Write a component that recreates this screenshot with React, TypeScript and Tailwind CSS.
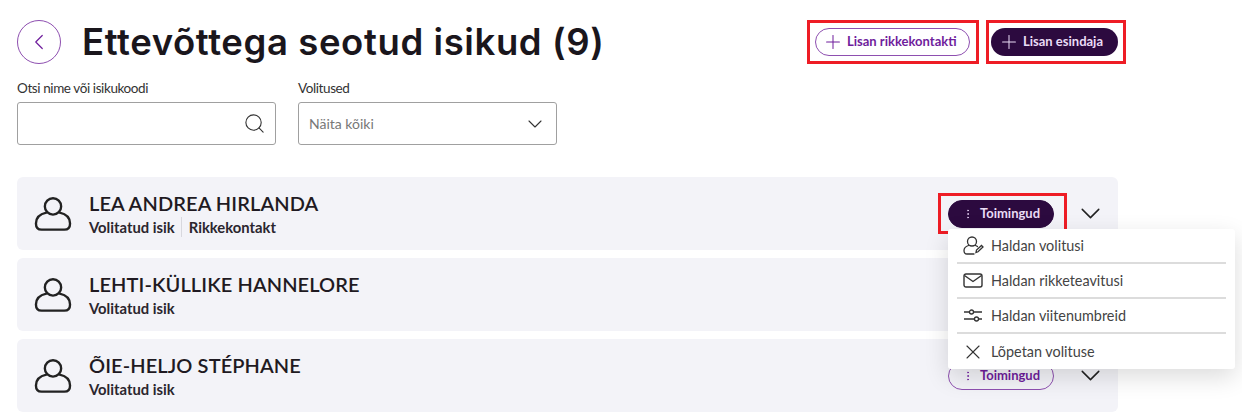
import { ChevronDown, ChevronLeft, EllipsisVertical, Plus, Search, X } from 'lucide-react';

// the second row's actions sit behind the open menu, so they are left out
const people = [
    { name: 'LEA ANDREA HIRLANDA', roles: ['Volitatud isik', 'Rikkekontakt'], active: true, covered: false },
    { name: 'LEHTI-KÜLLIKE HANNELORE', roles: ['Volitatud isik'], active: false, covered: true },
    { name: 'ÕIE-HELJO STÉPHANE', roles: ['Volitatud isik'], active: false, covered: false },
];

function PersonIcon() {
    return (
        <svg width="38" height="36" viewBox="0 0 40 38" fill="none" stroke="#222" strokeWidth="2.5" className="shrink-0">
            <circle cx="20" cy="11" r="8.6" />
            <path d="M13 17.5C6 19 2 23.5 2 29c0 4 2 6.5 6 6.5h24c4 0 6-2.500 6-6.500 0-5.500-4-10-11-11.500" strokeLinecap="round" />
        </svg>
    );
}

function PersonEditIcon() {
    return (
        <svg width="21" height="19" viewBox="0 0 21 19" fill="none" stroke="#333" strokeWidth="1.300" strokeLinecap="round">
            <circle cx="9" cy="5.500" r="4.500" />
            <path d="M5.500 9.500C2.500 10.500 1 12.500 1 14.500c0 2 1 3.500 3 3.500h7" />
            <path d="M12.500 9.500c.8.300 1.500.7 2 1.100" />
            <path d="M13 16.500l.5-2.500 5-4.500 1.500 1.500-5 4.800z" />
        </svg>
    );
}

function MailIcon() {
    return (
        <svg width="20" height="15" viewBox="0 0 20 15" fill="none" stroke="#333" strokeWidth="1.400" strokeLinejoin="round">
            <rect x="1" y="1" width="18" height="13" rx="2" />
            <path d="M1.500 2.500L10 8.500l8.500-6" />
        </svg>
    );
}

function SlidersIcon() {
    return (
        <svg width="20" height="13" viewBox="0 0 20 13" fill="none" stroke="#333" strokeWidth="1.300">
            <path d="M1 3h5.500M10.500 3H19M1 10h10.500M15.500 10H19" />
            <circle cx="8.500" cy="3" r="2" />
            <circle cx="13.500" cy="10" r="2" />
        </svg>
    );
}

function Toimingud({ active }: { active: boolean }) {
    return (
        <button
            className={`flex h-[28px] w-[106px] items-center justify-center gap-[6px] rounded-full border text-[13px] font-bold ${
                active ? 'border-[#2c0a3f] bg-[#2c0a3f] text-[#eadcf5]' : 'border-[#8e4fb0] bg-transparent text-[#6f1d9c]'
            }`}
        >
            <EllipsisVertical size={12} strokeWidth={2} className={active ? 'text-[#d9c4e8]' : 'text-[#7a2aa8]'} />
            Toimingud
        </button>
    );
}

function MenuItem({ icon, label, last }: { icon: React.ReactNode; label: string; last?: boolean }) {
    return (
        <div className={`mx-[9px] flex h-[35px] items-center ${last ? '' : 'border-b-2 border-[#dcdcdc]'}`}>
            <span className="flex w-[34px] justify-center pr-[2px]">{icon}</span>
            <span className="text-[14.400px] text-[#444]">{label}</span>
        </div>
    );
}

export default function App() {
    return (
        <div className="relative h-[416px] w-[1242px] overflow-hidden bg-white pl-[17px] font-['Lato',sans-serif] text-[#1f1a22]">
            <div className="flex w-[1109px] items-center pt-[20px]">
                <button className="flex h-[44px] w-[44px] items-center justify-center rounded-full border border-[#8e4fb0] text-[#6f1d9c]">
                    <ChevronLeft size={26} strokeWidth={1.100} />
                </button>
                <h1 className="ml-[21px] font-['Inter',sans-serif] text-[36.500px] leading-[44px] font-semibold tracking-[0.6px] text-[#1a161c]">
                    Ettevõttega seotud isikud (9)
                </h1>
                <div className="ml-auto flex items-center gap-[7px]">
                    <div className="border-[3px] border-[#ee1c25] py-[5px] pr-[6px] pl-[5px]">
                        <button className="flex h-[28px] w-[155px] items-center gap-[3px] rounded-full border border-[#8e4fb0] pl-[6px] text-[13px] font-bold text-[#6f1d9c]">
                            <Plus size={22} strokeWidth={1.100} />
                            Lisan rikkekontakti
                        </button>
                    </div>
                    <div className="border-[3px] border-[#ee1c25] py-[5px] pr-[5px] pl-[2px]">
                        <button className="flex h-[28px] w-[127px] items-center gap-[3px] rounded-full bg-[#2c0a3f] pl-[7px] text-[13px] font-bold text-[#eadcf5]">
                            <Plus size={22} strokeWidth={1.100} />
                            Lisan esindaja
                        </button>
                    </div>
                </div>
            </div>

            <div className="mt-[15px] flex gap-[22px]">
                <div>
                    <div className="h-[23px] text-[13.500px] leading-[18px] tracking-[-0.4px] text-[#333]">Otsi nime või isikukoodi</div>
                    <div className="flex h-[43px] w-[259px] items-center justify-end rounded-[3px] border border-[#a0a0a0] pr-[9px]">
                        <Search size={23} strokeWidth={1.150} className="text-[#333]" />
                    </div>
                </div>
                <div>
                    <div className="h-[23px] text-[13.500px] leading-[18px] tracking-[-0.4px] text-[#333]">Volitused</div>
                    <div className="flex h-[43px] w-[259px] items-center justify-between rounded-[3px] border border-[#a0a0a0] pr-[9px] pl-[10px]">
                        <span className="text-[14px] text-[#777]">Näita kõiki</span>
                        <ChevronDown size={24} strokeWidth={1.100} className="text-[#333]" />
                    </div>
                </div>
            </div>

            <div className="mt-[32px] flex w-[1101px] flex-col gap-[8px]">
                {people.map((person, i) => (
                    <div key={i} className="flex h-[73px] items-center rounded-[6px] bg-[#f3f3f8] pr-[11px] pl-[17px]">
                        <PersonIcon />
                        <div className="ml-[17px]">
                            <div className="text-[20px] leading-[24px] font-semibold tracking-[0.1px] text-[#1f1a22]">{person.name}</div>
                            <div className="mt-[2px] flex items-center text-[14.800px] leading-[20px] font-bold text-[#2b262e]">
                                {person.roles.map((role, j) => (
                                    <span key={role} className={j > 0 ? 'ml-[6px] border-l border-[#d8d8de] pl-[7px]' : ''}>
                                        {role}
                                    </span>
                                ))}
                            </div>
                        </div>
                        {!person.covered && (
                            <div className="ml-auto flex items-center gap-[20px]">
                                <Toimingud active={person.active} />
                                <ChevronDown size={33} strokeWidth={1.100} className="text-[#222]" />
                            </div>
                        )}
                    </div>
                ))}
            </div>

            {/* red annotation round the first row's button */}
            <div className="absolute top-[193px] left-[938px] h-[41px] w-[129px] border-[3px] border-[#ee1c25]" />

            <div className="absolute top-[229px] left-[948px] w-[287px] rounded-[3px] bg-white shadow-[0_8px_24px_rgba(0,0,0,0.14)]">
                <MenuItem icon={<PersonEditIcon />} label="Haldan volitusi" />
                <MenuItem icon={<MailIcon />} label="Haldan rikketeavitusi" />
                <MenuItem icon={<SlidersIcon />} label="Haldan viitenumbreid" />
                <MenuItem icon={<X size={24} strokeWidth={1.100} className="text-[#333]" />} label="Lõpetan volituse" last />
            </div>
        </div>
    );
}
